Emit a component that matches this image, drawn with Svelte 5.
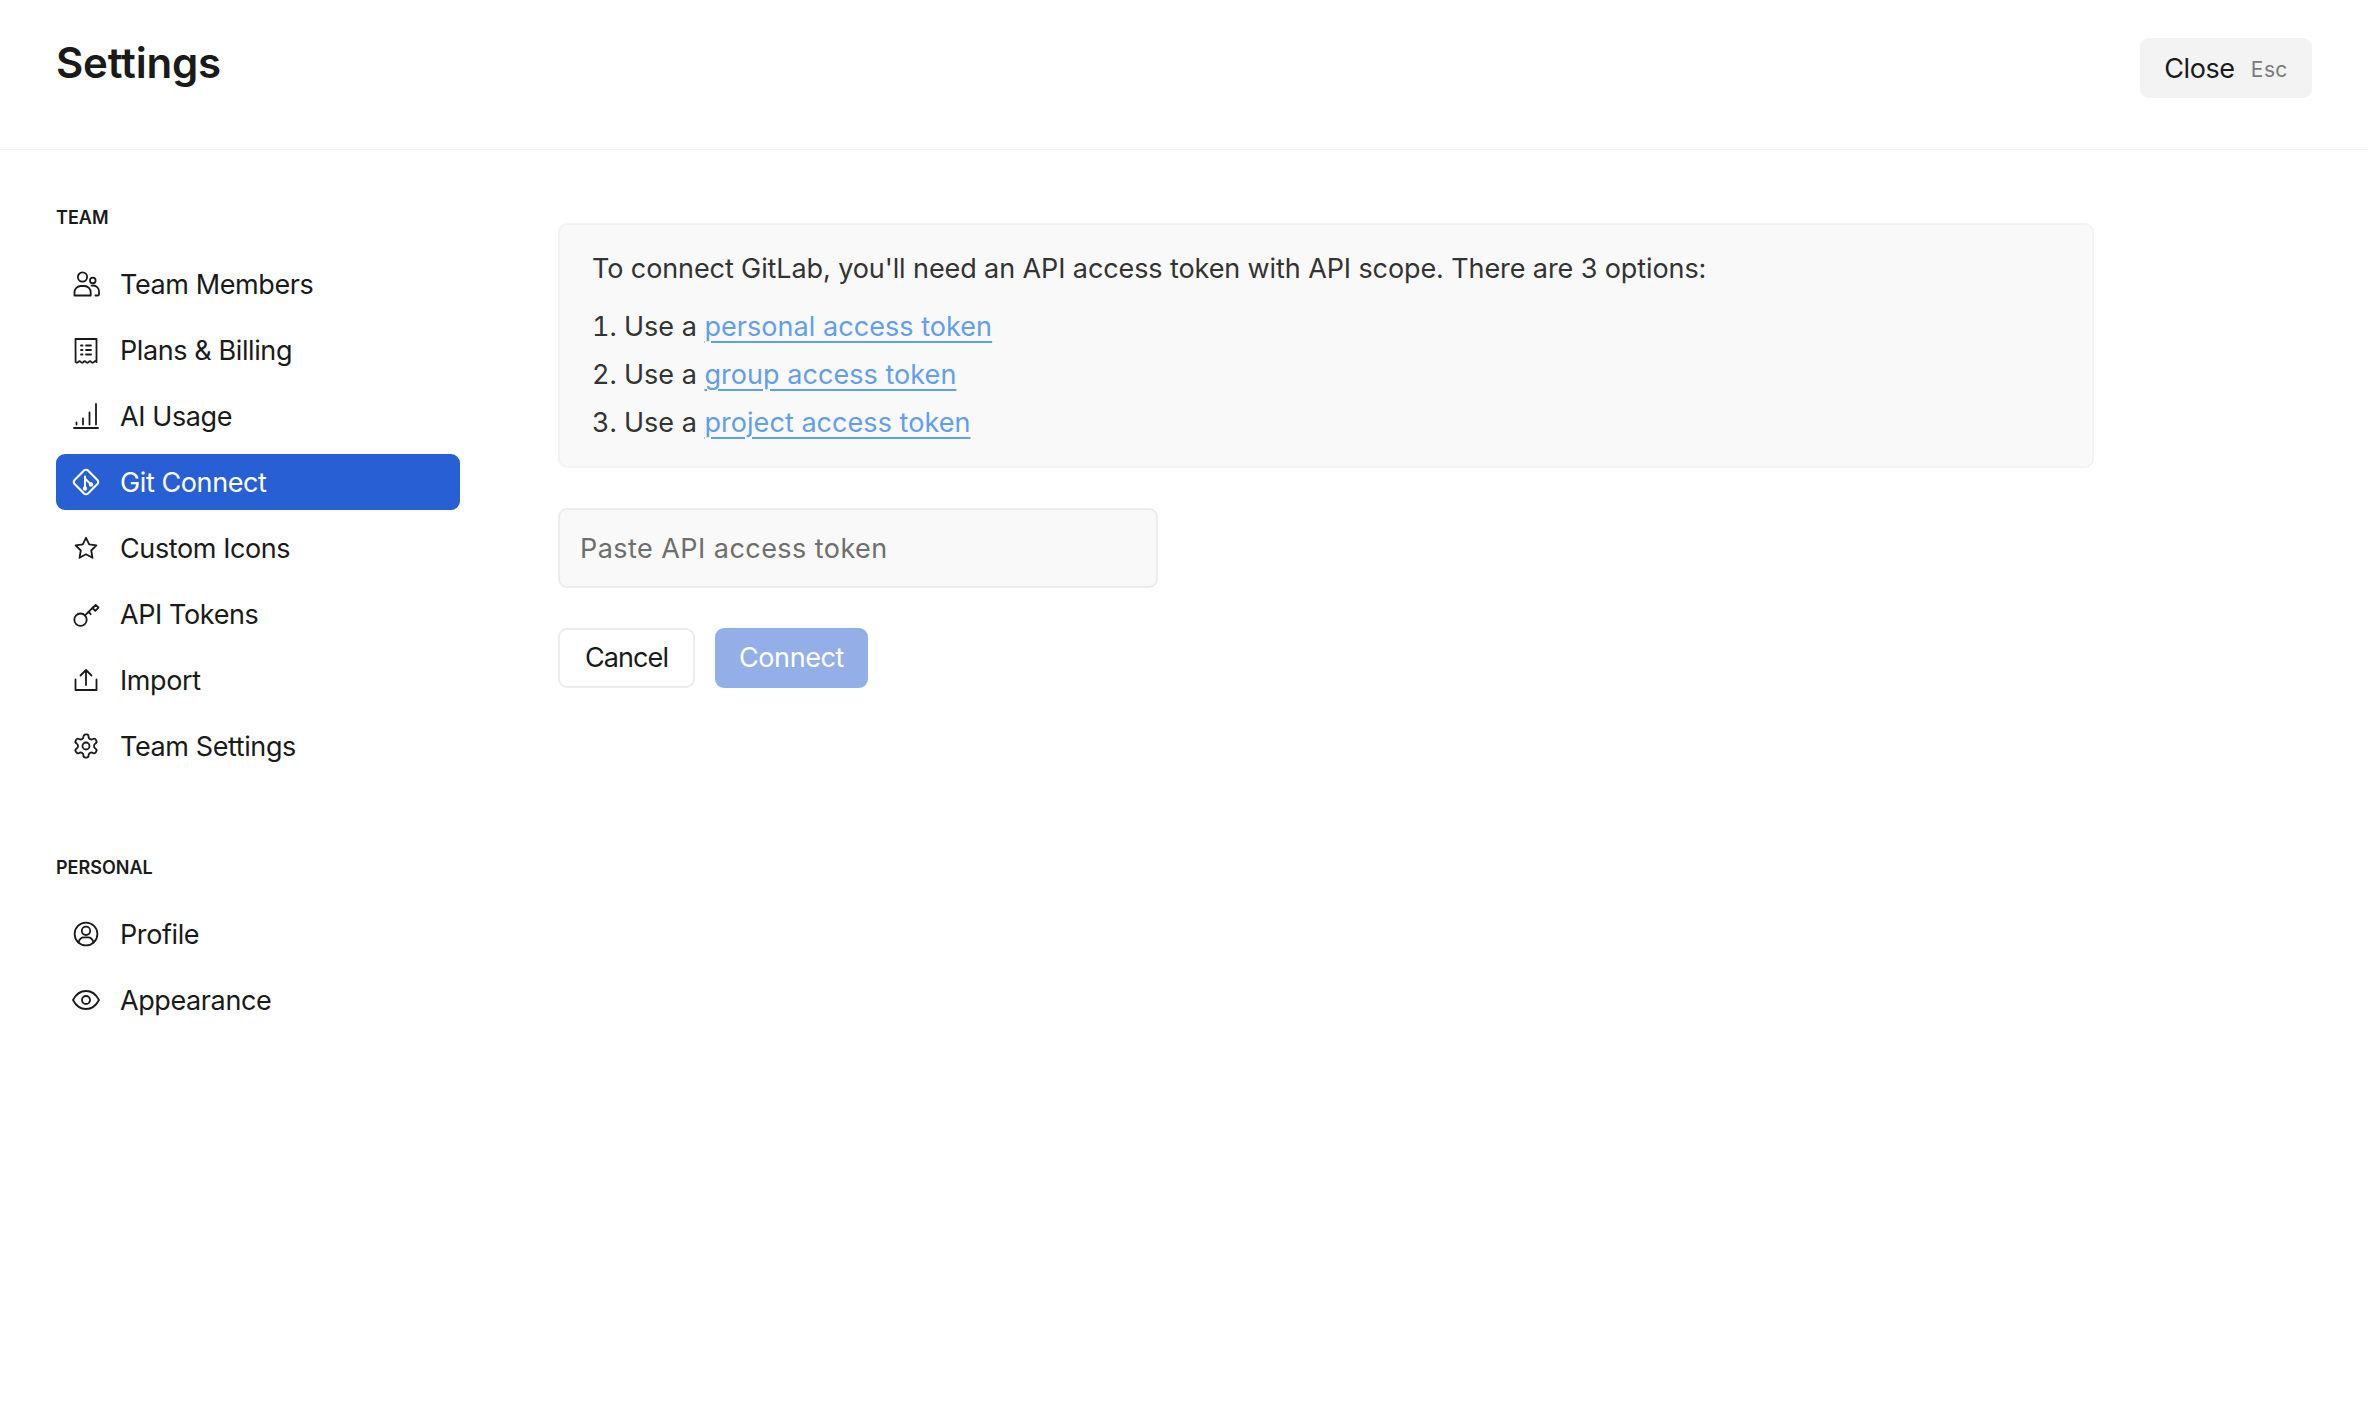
<script>
  const teamItems = [
    { label: 'Team Members', icon: 'members' },
    { label: 'Plans & Billing', icon: 'billing' },
    { label: 'AI Usage', icon: 'usage' },
    { label: 'Git Connect', icon: 'git', active: true },
    { label: 'Custom Icons', icon: 'star' },
    { label: 'API Tokens', icon: 'key' },
    { label: 'Import', icon: 'import' },
    { label: 'Team Settings', icon: 'gear' }
  ];
  const personalItems = [
    { label: 'Profile', icon: 'profile' },
    { label: 'Appearance', icon: 'eye' }
  ];
  const tokenLinks = ['personal access token', 'group access token', 'project access token'];
</script>

{#snippet icon(name)}
  <svg class="nav-icon" viewBox="0 0 28 28" fill="none" stroke="currentColor" stroke-width="1.8" stroke-linecap="round" stroke-linejoin="round" aria-hidden="true">
    {#if name === 'members'}
      <circle cx="10.5" cy="7" r="4.6" />
      <circle cx="20.8" cy="10.4" r="2.8" />
      <path d="M2.5 25.5v-3.2c0-3.6 2.8-6.3 6.3-6.3h3.6c3.6 0 6.3 2.8 6.3 6.3v3.2z" />
      <path d="M19.5 15.6c3.8-.6 7.5 1.600 7.500 5.600v3.100a1.200 1.200 0 0 1-1.200 1.200h-2.400" />
    {:else if name === 'billing'}
      <path d="M3.500 3h21v23q-1.300-1.500-2.600 0t-2.600 0-2.600 0-2.700 0-2.600 0-2.600 0-2.600 0-2.600 0z" />
      <path d="M9 9.500h1.500M14 9.500h5M9 14h1.500M14 14h5M9 18.500h1.500M14 18.500h5" />
    {:else if name === 'usage'}
      <path d="M2 26h24" />
      <path d="M4.500 20.500v2M11 16.500v6M17.500 10.500v12M24 2v20.500" />
    {:else if name === 'git'}
      <path d="M12 2.600 2.600 12a2.800 2.800 0 0 0 0 4l9.400 9.400a2.800 2.800 0 0 0 4 0l9.400-9.400a2.800 2.800 0 0 0 0-4L16 2.600a2.800 2.800 0 0 0-4 0z" stroke-width="2.100" />
      <path d="M13 8.500v12M13 10.500l6 6" stroke-width="2" />
      <circle cx="13" cy="20.500" r="1.300" fill="currentColor" />
      <circle cx="19" cy="16.500" r="1.300" fill="currentColor" />
    {:else if name === 'star'}
      <path d="m14 3.800 3.200 6.600 7.200 1-5.200 5.100 1.300 7.300-6.500-3.500-6.500 3.500 1.300-7.300-5.200-5.100 7.200-1z" />
    {:else if name === 'key'}
      <circle cx="8.500" cy="19.700" r="6.200" />
      <path d="m13 15.400 8.500-8.400" />
      <path d="m20.500 8 2.800 2.800 3.200-3.100-2.800-2.800z" />
      <path d="m16.500 12 2.200 2.200" />
    {:else if name === 'import'}
      <path d="M3.500 13.500v10.500h21V13.500" />
      <path d="M14 19V4M8.500 9.500 14 4l5.500 5.500" />
    {:else if name === 'gear'}
      <g transform="scale(1.1667)" stroke-width="1.540">
        <path d="M12.220 2h-.44a2 2 0 0 0-2 2v.18a2 2 0 0 1-1 1.730l-.43.25a2 2 0 0 1-2 0l-.15-.08a2 2 0 0 0-2.730.73l-.22.38a2 2 0 0 0 .73 2.730l.15.1a2 2 0 0 1 1 1.720v.51a2 2 0 0 1-1 1.740l-.15.09a2 2 0 0 0-.73 2.730l.22.38a2 2 0 0 0 2.730.73l.15-.08a2 2 0 0 1 2 0l.43.25a2 2 0 0 1 1 1.730V20a2 2 0 0 0 2 2h.44a2 2 0 0 0 2-2v-.18a2 2 0 0 1 1-1.730l.43-.25a2 2 0 0 1 2 0l.15.08a2 2 0 0 0 2.730-.73l.22-.39a2 2 0 0 0-.73-2.730l-.15-.08a2 2 0 0 1-1-1.740v-.5a2 2 0 0 1 1-1.740l.15-.09a2 2 0 0 0 .73-2.730l-.22-.38a2 2 0 0 0-2.730-.73l-.15.08a2 2 0 0 1-2 0l-.43-.25a2 2 0 0 1-1-1.730V4a2 2 0 0 0-2-2z" />
        <circle cx="12" cy="12" r="3" />
      </g>
    {:else if name === 'profile'}
      <circle cx="14" cy="14" r="11.400" />
      <circle cx="14" cy="10.800" r="4.200" />
      <path d="M6.500 22.700c.8-3.500 3.300-5.300 5.500-5.300h4c2.200 0 4.700 1.800 5.500 5.300" />
    {:else if name === 'eye'}
      <path d="M1 14C3.800 8.600 8.600 5 14 5s10.200 3.600 13 9c-2.800 5.400-7.600 9-13 9S3.800 19.400 1 14z" />
      <circle cx="14" cy="14" r="4" />
    {/if}
  </svg>
{/snippet}

{#snippet navList(items)}
  <ul class="nav-list">
    {#each items as item (item.label)}
      <li class="nav-item" class:active={item.active}>
        {@render icon(item.icon)}
        <span>{item.label}</span>
      </li>
    {/each}
  </ul>
{/snippet}

<div class="page">
  <header class="topbar">
    <h1>Settings</h1>
    <button class="close-btn">Close <span class="esc">Esc</span></button>
  </header>

  <div class="layout">
    <nav class="sidebar">
      <section class="nav-section">
        <h2>TEAM</h2>
        {@render navList(teamItems)}
      </section>
      <section class="nav-section">
        <h2>PERSONAL</h2>
        {@render navList(personalItems)}
      </section>
    </nav>

    <main class="content">
      <div class="info-box">
        <p>To connect GitLab, you'll need an API access token with API scope. There are 3 options:</p>
        <ol>
          {#each tokenLinks as link}
            <li>Use a <a href="#top">{link}</a></li>
          {/each}
        </ol>
      </div>

      <input class="token-input" type="text" placeholder="Paste API access token" />

      <div class="actions">
        <button class="btn cancel">Cancel</button>
        <button class="btn connect">Connect</button>
      </div>
    </main>
  </div>
</div>

<style>
  :global(body) {
    background: #fff;
    font-family: Inter, 'Liberation Sans', sans-serif;
    color: #1a1a1a;
  }
  .page {
    min-height: 1416px;
  }
  .topbar {
    height: 149px;
    border-bottom: 1px solid #f3f3f3;
    display: flex;
    justify-content: space-between;
    align-items: flex-start;
    padding: 0 56px;
  }
  h1 {
    margin: 36px 0 0;
    font-size: 42px;
    line-height: 54px;
    font-weight: 600;
    letter-spacing: -0.2px;
  }
  .close-btn {
    margin-top: 38px;
    height: 60px;
    width: 172px;
    padding: 0;
    border: none;
    border-radius: 9px;
    background: #f3f3f3;
    font: inherit;
    font-size: 27px;
    letter-spacing: -0.4px;
    color: #1a1a1a;
  }
  .esc {
    margin-left: 9px;
    font-size: 21px;
    letter-spacing: 0.4px;
    color: #7a7a7a;
    position: relative;
    top: -1px;
  }
  .layout {
    display: flex;
    padding: 0 56px;
  }
  .sidebar {
    width: 404px;
    flex-shrink: 0;
    padding-top: 56px;
  }
  .nav-section {
    margin-bottom: 82px;
  }
  h2 {
    margin: 0 0 26px;
    font-size: 18px;
    line-height: 24px;
    font-weight: 600;
  }
  .nav-list {
    list-style: none;
    margin: 0;
    padding: 0;
    display: flex;
    flex-direction: column;
    gap: 10px;
  }
  .nav-item {
    height: 56px;
    display: flex;
    align-items: center;
    gap: 20px;
    padding-left: 16px;
    border-radius: 9px;
    font-size: 27px;
    letter-spacing: -0.4px;
  }
  .nav-item.active {
    background: #285fd4;
    color: #fff;
  }
  .nav-icon {
    width: 28px;
    height: 28px;
    flex-shrink: 0;
  }
  .content {
    margin-left: 98px;
    width: 1536px;
    padding-top: 73px;
  }
  .info-box {
    box-sizing: border-box;
    height: 245px;
    padding: 24px 32px;
    background: #f9f9f9;
    border: 2px solid #f3f3f3;
    border-radius: 9px;
    font-size: 27px;
    color: #333;
  }
  .info-box p {
    margin: 0 0 14px;
    line-height: 40px;
    letter-spacing: -0.1px;
  }
  ol {
    margin: 0;
    padding: 0 0 0 32px;
  }
  ol li {
    line-height: 48px;
  }
  a {
    color: #619fee;
    letter-spacing: 0.05px;
    text-decoration: underline;
    text-underline-offset: 5px;
    text-decoration-thickness: 2px;
  }
  .token-input {
    display: block;
    box-sizing: border-box;
    margin-top: 40px;
    width: 600px;
    height: 80px;
    padding: 0 20px;
    background: #f9f9f9;
    border: 2px solid #ececec;
    border-radius: 9px;
    font: inherit;
    font-size: 27px;
    letter-spacing: 0.45px;
  }
  .token-input::placeholder {
    color: #6e6e6e;
    opacity: 1;
  }
  .actions {
    display: flex;
    gap: 20px;
    margin-top: 40px;
  }
  .btn {
    height: 60px;
    box-sizing: border-box;
    border-radius: 9px;
    font: inherit;
    font-size: 27px;
    padding: 0 0 2px;
  }
  .cancel {
    width: 137px;
    background: #fff;
    border: 2px solid #ececec;
    color: #1a1a1a;
    letter-spacing: -0.9px;
  }
  .connect {
    width: 153px;
    background: #94aee8;
    border: none;
    color: #fff;
    letter-spacing: -0.4px;
  }
</style>
